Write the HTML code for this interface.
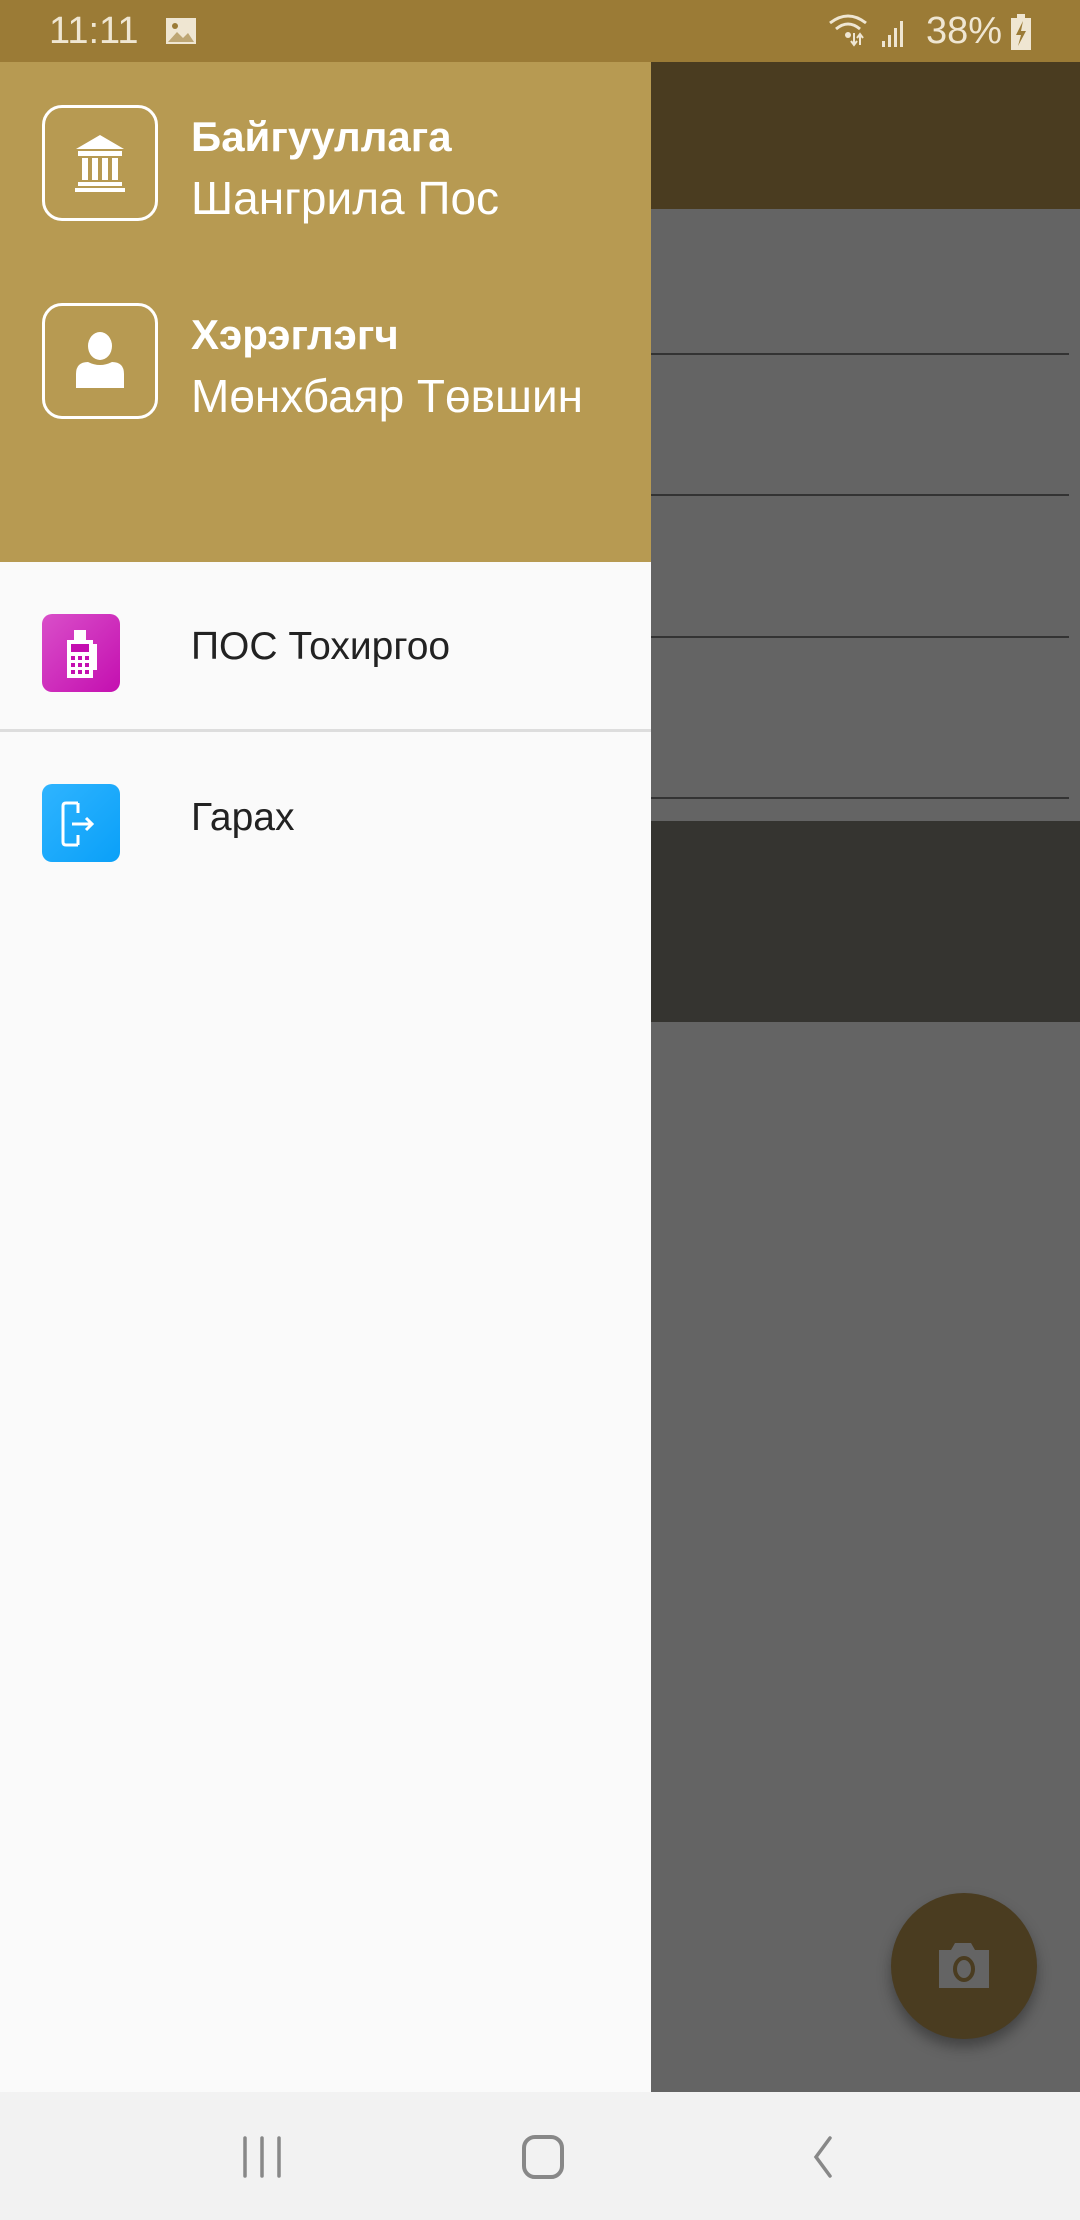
<!DOCTYPE html>
<html><head><meta charset="utf-8"><style>
*{margin:0;padding:0;box-sizing:border-box}
body{width:1080px;height:2220px;position:relative;overflow:hidden;font-family:"Liberation Sans",sans-serif;background:#646464}
.a{position:absolute}
</style></head><body>
<div class="a" style="left:0;top:0;width:1080px;height:62px;background:#9b7b36"></div>
<div class="a" style="left:49px;top:10px;font-size:38px;color:#efe6d2">11:11</div>
<svg class="a" style="left:165px;top:17px" width="32" height="28" viewBox="0 0 32 28"><rect x="1" y="1" width="30" height="26" fill="#efe6d2"/><circle cx="10" cy="9" r="3" fill="#9b7b36"/><path d="M3 25 L12 15 L18 21 L23 16 L29 25Z" fill="#9b7b36" opacity=".6"/></svg>
<svg class="a" style="left:828px;top:13px" width="80" height="36" viewBox="0 0 80 36"><path d="M2 10 Q20 -4 38 10" stroke="#efe6d2" stroke-width="3" fill="none"/><path d="M8 16 Q20 6 32 16" stroke="#efe6d2" stroke-width="3" fill="none"/><circle cx="20" cy="22" r="3" fill="#efe6d2"/><path d="M26 20v12M23 28l3 4 3-4M32 32v-10M29 25l3-4 3 4" stroke="#efe6d2" stroke-width="2" fill="none"/><rect x="54" y="28" width="3" height="6" fill="#efe6d2"/><rect x="60" y="22" width="3" height="12" fill="#efe6d2"/><rect x="66" y="15" width="3" height="19" fill="#efe6d2"/><rect x="72" y="8" width="3" height="26" fill="#efe6d2"/></svg>
<div class="a" style="left:926px;top:10px;font-size:38px;color:#efe6d2">38%</div>
<svg class="a" style="left:1010px;top:14px" width="22" height="36" viewBox="0 0 22 36"><rect x="7" y="0" width="8" height="4" fill="#efe6d2"/><rect x="1" y="4" width="20" height="32" fill="#efe6d2"/><path d="M13 7 L6 21 H11 L8 32 L16 17 H11Z" fill="#9b7b36"/></svg>

<div class="a" style="left:651px;top:62px;width:429px;height:147px;background:#4a3c20"></div>
<div class="a" style="left:651px;top:353px;width:418px;height:2px;background:#333"></div>
<div class="a" style="left:651px;top:494px;width:418px;height:2px;background:#333"></div>
<div class="a" style="left:651px;top:636px;width:418px;height:2px;background:#333"></div>
<div class="a" style="left:651px;top:797px;width:418px;height:2px;background:#333"></div>
<div class="a" style="left:651px;top:821px;width:429px;height:201px;background:#353430"></div>
<div class="a" style="left:891px;top:1893px;width:146px;height:146px;border-radius:50%;background:#4a3c20;box-shadow:0 8px 14px rgba(0,0,0,.35)"></div>
<svg class="a" style="left:937px;top:1942px" width="54" height="48" viewBox="0 0 54 48"><path d="M2 8 H14 L18 1 H34 L38 8 H52 V46 H2Z" fill="#646464"/><ellipse cx="27" cy="27" rx="9" ry="11" fill="none" stroke="#4a3c20" stroke-width="4"/></svg>

<div class="a" style="left:0;top:62px;width:651px;height:500px;background:#b79a52"></div>
<div class="a" style="left:42px;top:105px;width:116px;height:116px;border:3px solid #fff;border-radius:20px"></div>
<svg class="a" style="left:70px;top:133px" width="60" height="60" viewBox="0 0 60 60"><path d="M30 2 L54 16 H6Z" fill="#fff"/><rect x="8" y="18" width="44" height="5" fill="#fff"/><rect x="12" y="25" width="6" height="22" fill="#fff"/><rect x="22" y="25" width="6" height="22" fill="#fff"/><rect x="32" y="25" width="6" height="22" fill="#fff"/><rect x="42" y="25" width="6" height="22" fill="#fff"/><rect x="8" y="49" width="44" height="4" fill="#fff"/><rect x="5" y="55" width="50" height="4" fill="#fff"/></svg>
<div class="a" style="left:191px;top:113px;font-size:42px;font-weight:bold;color:#fff">Байгууллага</div>
<div class="a" style="left:191px;top:171px;font-size:46px;color:#fff">Шангрила Пос</div>
<div class="a" style="left:42px;top:303px;width:116px;height:116px;border:3px solid #fff;border-radius:20px"></div>
<svg class="a" style="left:74px;top:332px" width="52" height="58" viewBox="0 0 52 58"><ellipse cx="26" cy="14" rx="12" ry="14" fill="#fff"/><path d="M2 56 V42 Q2 30 14 30 Q26 36 38 30 Q50 30 50 42 V56Z" fill="#fff"/></svg>
<div class="a" style="left:191px;top:311px;font-size:42px;font-weight:bold;color:#fff">Хэрэглэгч</div>
<div class="a" style="left:191px;top:369px;font-size:46px;color:#fff">Мөнхбаяр Төвшин</div>

<div class="a" style="left:0;top:562px;width:651px;height:1530px;background:#fafafa"></div>
<div class="a" style="left:42px;top:614px;width:78px;height:78px;border-radius:10px;background:linear-gradient(135deg,#d94fc9,#c40fb0)"></div>
<svg class="a" style="left:64px;top:630px" width="34" height="50" viewBox="0 0 34 50"><rect x="10" y="0" width="12" height="10" fill="#fff"/><rect x="3" y="10" width="26" height="38" fill="#fff"/><rect x="7" y="14" width="18" height="8" fill="#c40fb0"/><g fill="#c40fb0"><rect x="7" y="26" width="4" height="4"/><rect x="14" y="26" width="4" height="4"/><rect x="21" y="26" width="4" height="4"/><rect x="7" y="33" width="4" height="4"/><rect x="14" y="33" width="4" height="4"/><rect x="21" y="33" width="4" height="4"/><rect x="7" y="40" width="4" height="4"/><rect x="14" y="40" width="4" height="4"/><rect x="21" y="40" width="4" height="4"/></g><rect x="29" y="14" width="4" height="26" fill="#fff"/></svg>
<div class="a" style="left:191px;top:625px;font-size:39px;color:#222">ПОС Тохиргоо</div>
<div class="a" style="left:0;top:729px;width:651px;height:3px;background:#ddd"></div>
<div class="a" style="left:42px;top:784px;width:78px;height:78px;border-radius:10px;background:linear-gradient(135deg,#2fb4ff,#0aa0f8)"></div>
<svg class="a" style="left:60px;top:800px" width="40" height="48" viewBox="0 0 40 48"><path d="M18 3 H6 Q3 3 3 6 V42 Q3 45 6 45 H18 M18 3 V13 M18 45 V35" stroke="#fff" stroke-width="3" fill="none"/><path d="M12 24 H32 M26 18 L32 24 L26 30" stroke="#fff" stroke-width="3" fill="none"/></svg>
<div class="a" style="left:191px;top:796px;font-size:39px;color:#222">Гарах</div>

<div class="a" style="left:0;top:2092px;width:1080px;height:128px;background:#f2f2f2"></div>
<svg class="a" style="left:240px;top:2135px" width="44" height="44" viewBox="0 0 44 44"><path d="M5 3V41M22 3V41M39 3V41" stroke="#888" stroke-width="3.5" stroke-linecap="round"/></svg>
<div class="a" style="left:522px;top:2135px;width:42px;height:44px;border:4px solid #888;border-radius:13px"></div>
<svg class="a" style="left:808px;top:2135px" width="30" height="44" viewBox="0 0 30 44"><path d="M22 3 L8 22 L22 41" stroke="#888" stroke-width="3.5" fill="none" stroke-linecap="round"/></svg>
</body></html>
